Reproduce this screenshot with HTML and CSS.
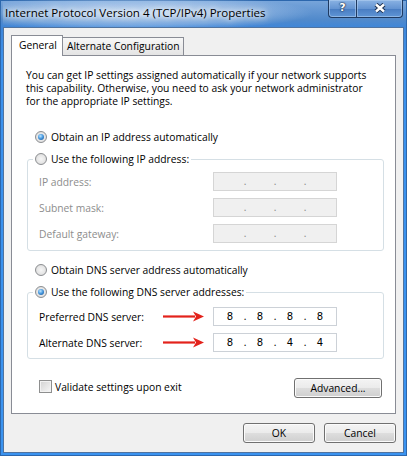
FILE: index.html
```html
<!DOCTYPE html>
<html>
<head>
<meta charset="utf-8">
<title>Internet Protocol Version 4 (TCP/IPv4) Properties</title>
<link rel="stylesheet" href="styles.css">
</head>
<body>
<div class="window">
  <div class="titlebar">
    <div class="title">Internet Protocol Version 4 (TCP/IPv4) Properties</div>
    <div class="caps">
      <div class="cap help">?</div>
      <div class="cap close">
        <svg width="12" height="10" viewBox="0 0 12 10"><path d="M2 1.5 L10 8.5 M10 1.5 L2 8.5" stroke="#1d2f4d" stroke-width="4.4" fill="none"/><path d="M2 1.5 L10 8.5 M10 1.5 L2 8.5" stroke="#fff" stroke-width="2.4" fill="none"/></svg>
      </div>
    </div>
  </div>
  <div class="client">
    <div class="tabs">
      <div class="tab active">General</div>
      <div class="tab">Alternate Configuration</div>
    </div>
    <div class="panel">
      <p class="intro">You can get IP settings assigned automatically if your network supports<br>this capability. Otherwise, you need to ask your network administrator<br>for the appropriate IP settings.</p>

      <div class="option first"><span class="radio checked"></span>Obtain an IP address automatically</div>

      <fieldset class="group ip">
        <legend><span class="opt"><span class="radio"></span>Use the following IP address:</span></legend>
        <div class="rows">
          <span class="label off">IP address:</span><span class="slot"></span>
          <div class="ipbox off"><span class="oct"></span><span class="dot">.</span><span class="oct"></span><span class="dot">.</span><span class="oct"></span><span class="dot">.</span><span class="oct"></span></div>
          <span class="label off">Subnet mask:</span><span class="slot"></span>
          <div class="ipbox off"><span class="oct"></span><span class="dot">.</span><span class="oct"></span><span class="dot">.</span><span class="oct"></span><span class="dot">.</span><span class="oct"></span></div>
          <span class="label off">Default gateway:</span><span class="slot"></span>
          <div class="ipbox off"><span class="oct"></span><span class="dot">.</span><span class="oct"></span><span class="dot">.</span><span class="oct"></span><span class="dot">.</span><span class="oct"></span></div>
        </div>
      </fieldset>

      <div class="option dns-auto"><span class="radio"></span>Obtain DNS server address automatically</div>

      <fieldset class="group dns">
        <legend><span class="opt"><span class="radio checked"></span>Use the following DNS server addresses:</span></legend>
        <div class="rows">
          <span class="label">Preferred DNS server:</span>
          <span class="slot"><svg class="arrow" width="41" height="11" viewBox="0 0 41 11"><path d="M0 5.5 H32" stroke="#e3221b" stroke-width="2.2"/><path d="M30 0.5 L41 5.5 L30 10.5 L33 5.5 Z" fill="#e3221b"/></svg></span>
          <div class="ipbox"><span class="oct">8</span><span class="dot">.</span><span class="oct">8</span><span class="dot">.</span><span class="oct">8</span><span class="dot">.</span><span class="oct">8</span></div>
          <span class="label">Alternate DNS server:</span>
          <span class="slot"><svg class="arrow" width="41" height="11" viewBox="0 0 41 11"><path d="M0 5.5 H32" stroke="#e3221b" stroke-width="2.2"/><path d="M30 0.5 L41 5.5 L30 10.5 L33 5.5 Z" fill="#e3221b"/></svg></span>
          <div class="ipbox"><span class="oct">8</span><span class="dot">.</span><span class="oct">8</span><span class="dot">.</span><span class="oct">4</span><span class="dot">.</span><span class="oct">4</span></div>
        </div>
      </fieldset>

      <div class="bottom-row">
        <label class="checkrow"><span class="check"></span>Validate settings upon exit</label>
        <button class="btn adv">Advanced...</button>
      </div>
    </div>
    <div class="footer">
      <button class="btn">OK</button>
      <button class="btn">Cancel</button>
    </div>
  </div>
</div>
</body>
</html>
```
FILE: styles.css
```css
* { box-sizing: border-box; }
html, body { margin: 0; padding: 0; }
body {
  width: 407px;
  height: 456px;
  overflow: hidden;
  font-family: "Open Sans", "Noto Sans", sans-serif;
  font-size: 10.3px;
  color: #000;
  background: #3a8ee8;
}

.window {
  width: 407px;
  height: 456px;
  display: flex;
  flex-direction: column;
  padding: 0 3px 3px 3px;
  background: linear-gradient(180deg, #79a6db 0px, #5089cb 20px, #3f86d8 27px, #3b91ec 60px, #3a93f0 100%);
  box-shadow: inset 0 0 0 1px #2c67ad;
}

/* title bar */
.titlebar {
  height: 27px;
  display: flex;
  justify-content: space-between;
  align-items: flex-start;
  background: radial-gradient(ellipse 180px 18px at 130px 13px, rgba(225,238,252,.75), rgba(200,222,246,.35) 70%, rgba(255,255,255,0) 100%);
}
.title {
  margin: 5px 0 0 2px;
  font-size: 11.55px;
  line-height: 16px;
  white-space: nowrap;
  color: #000;
  text-shadow: 0 0 5px #fff, 0 0 8px #fff, 0 0 12px rgba(255,255,255,.8);
}
.caps {
  display: flex;
  margin-right: 1px;
}
.cap {
  height: 18px;
  border: 1px solid #1f3a61;
  border-top: none;
  background: linear-gradient(180deg, rgba(140,180,228,.9) 0%, rgba(100,148,210,.9) 50%, rgba(70,122,192,.95) 51%, rgba(96,150,214,.95) 100%);
  box-shadow: inset 0 0 0 1px rgba(200,225,250,.45);
  display: flex;
  align-items: center;
  justify-content: center;
}
.help {
  width: 28px;
  border-right: none;
  border-radius: 0 0 0 4px;
  color: #fff;
  font-family: "DejaVu Sans", sans-serif;
  font-weight: bold;
  font-size: 11px;
  line-height: 12px;
  padding-bottom: 2px;
  text-shadow: 0 0 1px #1d2f4d, 0 0 1px #1d2f4d, 0 0 2px #1d2f4d;
}
.close {
  width: 47px;
  border-radius: 0 0 4px 0;
  padding-bottom: 1px;
}

/* client */
.client {
  flex: 1;
  display: flex;
  flex-direction: column;
  background: #f0f0f0;
  border: 1px solid #4f73a0;
  padding: 7px 7px 9px 7px;
}

.tabs {
  display: flex;
  align-items: flex-end;
  height: 20px;
}
.tab {
  height: 18px;
  width: 121px;
  padding: 0 0 0 4px;
  border: 1px solid #898c95;
  border-bottom: none;
  border-left: none;
  background: linear-gradient(180deg, #f7f7f7, #e4e4e4);
  line-height: 17px;
  white-space: nowrap;
}
.tab.active {
  width: 52px;
  height: 21px;
  margin-bottom: -1px;
  border-left: 1px solid #898c95;
  background: #fff;
  padding-left: 7px;
  line-height: 19px;
  position: relative;
  z-index: 1;
}

.panel {
  flex: 1;
  display: flex;
  flex-direction: column;
  background: #fff;
  border: 1px solid #898c95;
  padding: 13px 11px 0 14px;
}

.intro {
  margin: 0;
  line-height: 13px;
  white-space: nowrap;
}

.option, .opt {
  display: flex;
  align-items: center;
  height: 16px;
  white-space: nowrap;
}
.option { margin-left: 9px; }
.option.first { margin-top: 21px; }
.option.dns-auto { margin-top: 11px; }

.radio {
  width: 12px;
  height: 12px;
  margin-right: 4px;
  flex: none;
  border-radius: 50%;
  border: 1px solid #8c8e91;
  background: radial-gradient(circle at 50% 50%, #f6f6f6 0, #e6e6e6 55%, #cfcfcf 100%);
  display: inline-flex;
  align-items: center;
  justify-content: center;
}
.radio.checked::after {
  content: "";
  width: 6px;
  height: 6px;
  border-radius: 50%;
  background: radial-gradient(circle at 40% 35%, #bfe6ff 0, #4a9be0 45%, #14498a 100%);
}

.group {
  margin: 6px 0 0 1px;
  padding: 5px 0 7px 11px;
  border: 1px solid #d5dfe5;
  border-radius: 3px;
  min-width: 0;
}
.group.dns {
  margin-top: 6px;
  padding-top: 7px;
  padding-bottom: 6px;
}
.group legend {
  padding: 0 2px;
  margin-left: -6px;
  height: 16px;
}

.rows {
  display: grid;
  grid-template-columns: 124px 50px 124px;
  grid-auto-rows: 19px;
  row-gap: 7px;
  align-items: center;
}
.label { white-space: nowrap; }
.label.off { color: #8d8d8d; }
.slot { display: flex; align-items: center; }

.ipbox {
  width: 124px;
  height: 19px;
  border: 1px solid #ccd1d7;
  background: #fff;
  display: flex;
  align-items: center;
  padding-left: 5px;
  font-family: "DejaVu Sans", sans-serif;
  font-size: 10px;
}
.ipbox.off {
  background: #f0f0f0;
  border-color: #d5d5d5;
  color: #8d8d8d;
}
.oct { width: 22px; text-align: center; }
.dot { width: 8px; text-align: center; }

.bottom-row {
  margin: 19px 2px 0 13px;
  height: 20px;
  display: flex;
  align-items: center;
  justify-content: space-between;
}
.checkrow {
  display: flex;
  align-items: center;
  white-space: nowrap;
  margin-top: -3px;
}
.check {
  width: 13px;
  height: 13px;
  margin-right: 3px;
  border: 1px solid #8e8f8f;
  background: linear-gradient(135deg, #d2d2d2, #f7f7f7);
  box-shadow: inset 0 0 0 1px #f2f2f2;
}

.btn {
  height: 20px;
  width: 72px;
  padding: 0;
  border: 1px solid #707070;
  border-radius: 3px;
  background: linear-gradient(180deg, #f4f4f4 0%, #ebebeb 48%, #dddddd 52%, #cfcfcf 100%);
  box-shadow: inset 0 0 0 1px #fbfbfb;
  font: inherit;
  color: #000;
}
.btn.adv { width: 88px; }

.footer {
  margin-top: 9px;
  display: flex;
  justify-content: flex-end;
  gap: 9px;
}
```
